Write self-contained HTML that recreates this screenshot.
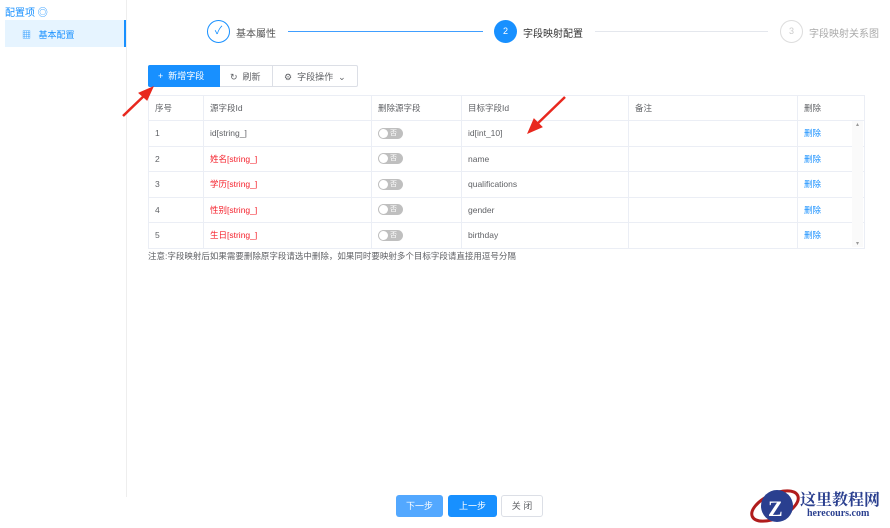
<!DOCTYPE html>
<html><head><meta charset="utf-8"><style>
*{margin:0;padding:0;box-sizing:border-box}
body{width:890px;height:528px;background:#fff;font-family:"Liberation Sans","Noto Sans CJK SC",sans-serif;font-size:9px;color:#606266;position:relative;overflow:hidden}
.a{position:absolute}
.t{position:absolute;white-space:nowrap}
table{position:absolute;left:148px;top:95px;width:716px;border-collapse:collapse;table-layout:fixed}
td{border:1px solid #ebeef5;height:25.5px;padding:0 6px;font-size:8.5px;color:#606266}
tr.h td{height:25px;color:#606266}
.r{color:#f5222d}
.sw{display:inline-block;width:25px;height:11px;border-radius:6px;background:#bfbfbf;position:relative;vertical-align:middle;color:#fff;font-size:7px;line-height:11px;padding-left:12px}
.sw:before{content:"";position:absolute;left:1px;top:1px;width:9px;height:9px;border-radius:50%;background:#fff}
.lk{color:#1890ff}
</style></head><body>
<div class="t" style="left:5px;top:4px;color:#1890ff;font-size:10px">配置项 ◎</div>
<div class="a" style="left:5px;top:20px;width:121px;height:27px;background:#e6f4ff;border-right:2px solid #1890ff"></div>
<div class="t" style="left:22px;top:28px;color:#1890ff;font-size:9px">▦&nbsp;&nbsp;&nbsp;基本配置</div>
<div class="a" style="left:126px;top:0;width:1px;height:497px;background:#eee"></div>

<div class="a" style="left:207px;top:20px;width:23px;height:23px;border:1px solid #1890ff;border-radius:50%;color:#1890ff;text-align:center;line-height:21px;font-size:11px">✓</div>
<div class="t" style="left:236px;top:25px;font-size:10px;color:#555">基本屬性</div>
<div class="a" style="left:288px;top:31px;width:195px;height:1px;background:#409eff"></div>
<div class="a" style="left:494px;top:20px;width:23px;height:23px;background:#1890ff;border-radius:50%;color:#fff;text-align:center;line-height:23px;font-size:9px">2</div>
<div class="t" style="left:523px;top:25px;font-size:10px;color:#333">字段映射配置</div>
<div class="a" style="left:595px;top:31px;width:173px;height:1px;background:#e4e7ed"></div>
<div class="a" style="left:780px;top:20px;width:23px;height:23px;border:1px solid #ddd;border-radius:50%;color:#ccc;text-align:center;line-height:21px;font-size:9px">3</div>
<div class="t" style="left:809px;top:25px;font-size:10px;color:#aaa">字段映射关系图</div>

<div class="a" style="left:148px;top:65px;width:210px;height:22px;border:1px solid #dcdfe6;border-radius:2px"></div>
<div class="a" style="left:148px;top:65px;width:72px;height:22px;background:#1890ff;border-radius:2px 0 0 2px;color:#fff;font-size:9px;line-height:22px;padding-left:10px">+&nbsp;&nbsp;新增字段</div>
<div class="a" style="left:272px;top:65px;width:1px;height:22px;background:#dcdfe6"></div>
<div class="t" style="left:230px;top:70px;font-size:9px">↻&nbsp;&nbsp;刷新</div>
<div class="t" style="left:284px;top:70px;font-size:9px">⚙&nbsp;&nbsp;字段操作&nbsp;&nbsp;⌄</div>

<table>
<colgroup><col style="width:55px"><col style="width:168px"><col style="width:90px"><col style="width:167px"><col style="width:169px"><col style="width:67px"></colgroup>
<tr class="h"><td>序号</td><td>源字段Id</td><td>删除源字段</td><td>目标字段Id</td><td>备注</td><td>删除</td></tr>
<tr><td>1</td><td>id[string_]</td><td><span class="sw">否</span></td><td>id[int_10]</td><td></td><td class="lk">删除</td></tr>
<tr><td>2</td><td class="r">姓名[string_]</td><td><span class="sw">否</span></td><td>name</td><td></td><td class="lk">删除</td></tr>
<tr><td>3</td><td class="r">学历[string_]</td><td><span class="sw">否</span></td><td>qualifications</td><td></td><td class="lk">删除</td></tr>
<tr><td>4</td><td class="r">性别[string_]</td><td><span class="sw">否</span></td><td>gender</td><td></td><td class="lk">删除</td></tr>
<tr><td>5</td><td class="r">生日[string_]</td><td><span class="sw">否</span></td><td>birthday</td><td></td><td class="lk">删除</td></tr>
</table>
<div class="a" style="left:852px;top:121px;width:11px;height:126px;background:#fafafa;color:#999;font-size:6px;text-align:center">▴<div style="position:absolute;bottom:0;width:11px">▾</div></div>
<div class="t" style="left:148px;top:250px;font-size:8.5px">注意:字段映射后如果需要删除原字段请选中删除，如果同时要映射多个目标字段请直接用逗号分隔</div>

<svg class="a" style="left:0;top:0" width="890" height="528"><g fill="#e8281e" stroke="#e8281e" stroke-width="2.5"><line x1="123" y1="116" x2="147" y2="93"/><polygon points="153,87 139,93 147,100" stroke-width="1"/><line x1="565" y1="97" x2="534" y2="127"/><polygon points="528,133 534,119 542,127" stroke-width="1"/></g>
<ellipse cx="775" cy="506" rx="25" ry="12" fill="none" stroke="#b01c1c" stroke-width="3" transform="rotate(-25 775 506)"/>
<circle cx="777" cy="506" r="16" fill="#2a3f8f"/><text x="768" y="516" fill="#fff" font-size="22" font-weight="bold" font-family="Liberation Serif">Z</text></svg>
<div class="t" style="left:800px;top:487px;font-size:16px;font-weight:bold;color:#2a3f8f;font-family:'Liberation Serif','Noto Serif CJK SC',serif">这里教程网</div>
<div class="t" style="left:807px;top:508px;font-size:10px;font-weight:bold;color:#2a3f8f;font-family:'Liberation Serif',serif">herecours.com</div>

<div class="a" style="left:396px;top:495px;width:47px;height:22px;background:#53a8ff;border-radius:3px;color:#fff;text-align:center;line-height:22px;font-size:9px">下一步</div>
<div class="a" style="left:448px;top:495px;width:49px;height:22px;background:#1890ff;border-radius:3px;color:#fff;text-align:center;line-height:22px;font-size:9px">上一步</div>
<div class="a" style="left:501px;top:495px;width:42px;height:22px;border:1px solid #dcdfe6;border-radius:3px;text-align:center;line-height:20px;font-size:9px">关 闭</div>
</body></html>
